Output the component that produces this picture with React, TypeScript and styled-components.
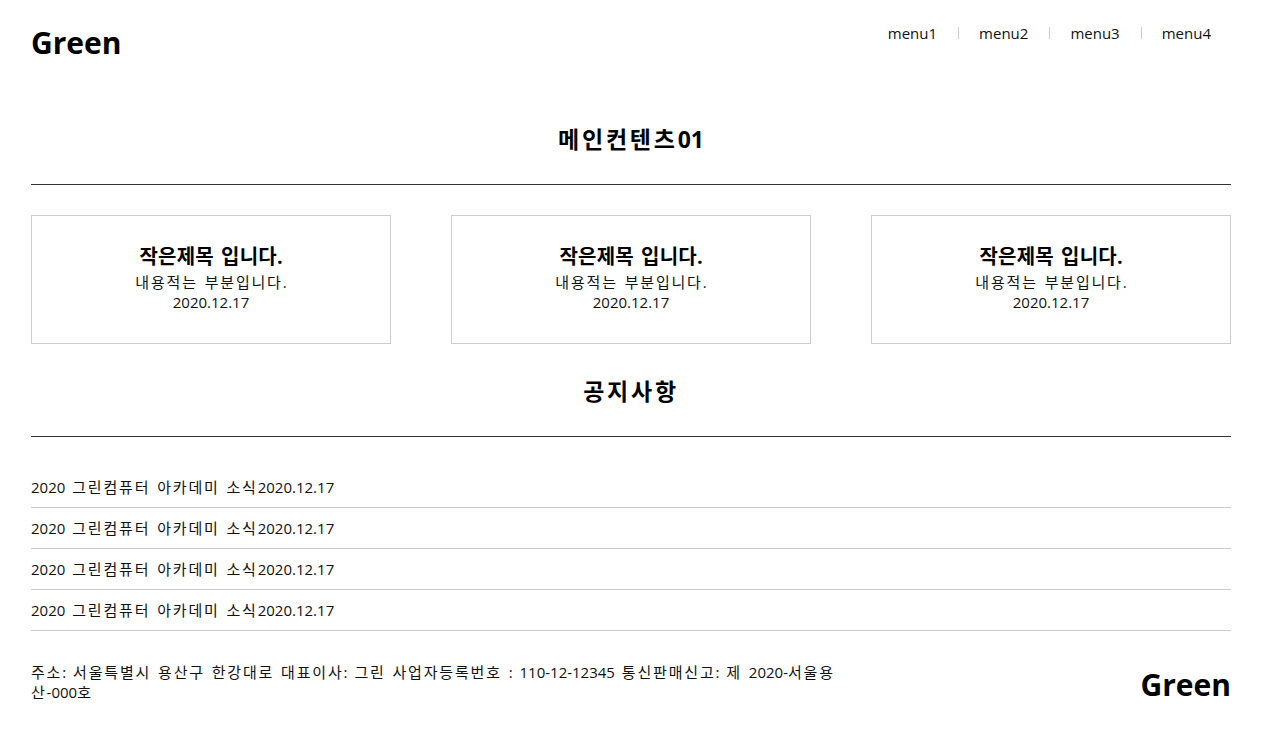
import React from "react";
import styled, { createGlobalStyle } from "styled-components";

const Global = createGlobalStyle`
  * { box-sizing: border-box; }
  html, body { margin: 0; padding: 0; background: #fff; }
  body {
    font-family: "Open Sans", "Noto Sans CJK KR", sans-serif;
    font-size: 15px;
    color: #111;
    word-spacing: 3px;
  }
  ul { list-style: none; margin: 0; padding: 0; }
  h1, h2, h3, p { margin: 0; }
  a { color: inherit; text-decoration: none; }
`;

const Ko = styled.span`
  letter-spacing: 0.12em;
`;

/* each Hangul syllable gets the wider spacing of the reference font */
function K({ t }: { t: string }) {
  const parts = t.split(/([\uAC00-\uD7A3])/);
  return (
    <>
      {parts.map((p, i) => (i % 2 === 1 ? <Ko key={i}>{p}</Ko> : p))}
    </>
  );
}

const Wrap = styled.div`
  width: 1200px;
  margin-left: 31px;
`;

const Header = styled.header`
  display: flex;
  justify-content: space-between;
  align-items: flex-start;
  height: 92px;
  padding-top: 22px;
`;

const Logo = styled.h1`
  margin-top: 1px;
  font-size: 30px;
  line-height: 40px;
  font-weight: 700;
  color: #000;
`;

const Nav = styled.ul`
  display: flex;
  margin-top: 1px;
`;

const NavItem = styled.li<{ $first?: boolean }>`
  position: relative;
  padding: 0 21px;
  font-size: 15px;
  line-height: 20px;
  &:last-child { padding-right: 20px; }
  &::before {
    content: "";
    display: ${(p) => (p.$first ? "none" : "block")};
    position: absolute;
    left: 0;
    top: 4px;
    width: 1px;
    height: 12px;
    background: #ccc;
  }
`;

const SectionTitle = styled.h2<{ $top: number }>`
  margin-top: ${(p) => p.$top}px;
  padding-bottom: 30px;
  border-bottom: 1px solid #333;
  text-align: center;
  font-size: 23px;
  line-height: 30px;
  font-weight: 700;
  color: #000;
`;

const Cards = styled.div`
  display: grid;
  grid-template-columns: repeat(3, 360px);
  justify-content: space-between;
  margin-top: 30px;
`;

const Card = styled.div`
  height: 129px;
  border: 1px solid #ccc;
  display: flex;
  flex-direction: column;
  align-items: center;
  justify-content: center;
  text-align: center;
  padding-bottom: 2px;
`;

const CardTitle = styled.h3`
  font-size: 20px;
  line-height: 24px;
  font-weight: 700;
  color: #000;
  margin-bottom: 3px;
  word-spacing: 2px;
  ${Ko} { letter-spacing: 0.01em; }
`;

const CardText = styled.p`
  font-size: 15px;
  line-height: 20px;
`;

const Notice = styled.ul`
  margin-top: 30px;
`;

const NoticeItem = styled.li`
  height: 41px;
  padding-top: 10px;
  border-bottom: 1px solid #ccc;
  font-size: 15px;
  line-height: 20px;
`;

const Footer = styled.footer`
  display: flex;
  justify-content: space-between;
  align-items: flex-end;
  padding-top: 31px;
`;

const Address = styled.p`
  width: 840px;
  font-size: 15px;
  line-height: 20px;
`;

const FooterLogo = styled.div`
  font-size: 30px;
  line-height: 36px;
  font-weight: 700;
  color: #000;
  margin-bottom: -1px;
`;

const menus = ["menu1", "menu2", "menu3", "menu4"];

export default function App() {
  return (
    <>
      <Global />
      <Wrap>
        <Header>
          <Logo>Green</Logo>
          <Nav>
            {menus.map((m, i) => (
              <NavItem key={m} $first={i === 0}>
                <a href="#">{m}</a>
              </NavItem>
            ))}
          </Nav>
        </Header>
        <SectionTitle $top={32}>
          <K t="메인컨텐츠01" />
        </SectionTitle>
        <Cards>
          {[0, 1, 2].map((i) => (
            <Card key={i}>
              <CardTitle>
                <K t="작은제목 입니다." />
              </CardTitle>
              <CardText>
                <K t="내용적는 부분입니다." />
              </CardText>
              <CardText>2020.12.17</CardText>
            </Card>
          ))}
        </Cards>
        <SectionTitle $top={32}>
          <K t="공지사항" />
        </SectionTitle>
        <Notice>
          {[0, 1, 2, 3].map((i) => (
            <NoticeItem key={i}>
              <K t="2020 그린컴퓨터 아카데미 소식2020.12.17" />
            </NoticeItem>
          ))}
        </Notice>
        <Footer>
          <Address>
            <K t="주소: 서울특별시 용산구 한강대로 대표이사: 그린 사업자등록번호 : 110-12-12345 통신판매신고: 제 2020-서울용산-000호" />
          </Address>
          <FooterLogo>Green</FooterLogo>
        </Footer>
      </Wrap>
    </>
  );
}
